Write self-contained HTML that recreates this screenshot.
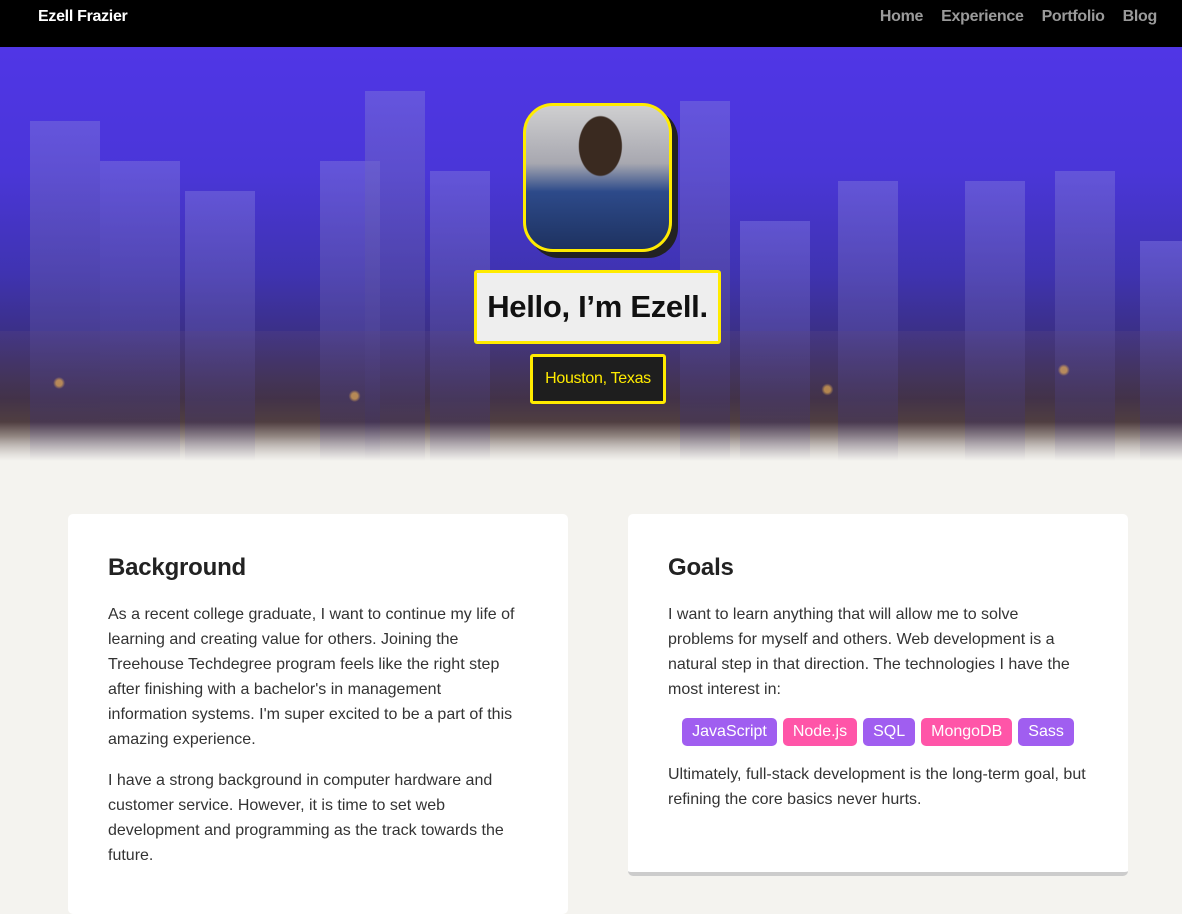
<!DOCTYPE html>
<html><head><meta charset="utf-8"><style>
*{margin:0;padding:0;box-sizing:border-box}
body{width:1182px;height:904px;overflow:hidden;background:#f4f3ef;font-family:"Liberation Sans",sans-serif;color:#333;position:relative}
nav{position:absolute;top:0;left:0;right:0;height:47px;background:#000;}
nav .brand{position:absolute;left:38px;top:8px;color:#fff;font-weight:bold;font-size:16px;letter-spacing:-0.3px}
nav .links{position:absolute;right:25px;top:8px;font-weight:bold;font-size:16px;color:#9a9a9a;letter-spacing:-0.3px}
nav .links span{margin-left:18px}
.hero{position:absolute;top:47px;left:0;width:1182px;height:414px;overflow:hidden;
background:linear-gradient(180deg,#5036e6 0%,#4a36d8 30%,#3f33b0 55%,#3a2f7e 72%,#3d3050 85%,#6a5a50 94%,#f4f3ef 100%)}
.b{position:absolute;bottom:0;background:linear-gradient(180deg,rgba(120,110,220,.55),rgba(60,50,120,.6))}
.lights{position:absolute;left:0;right:0;bottom:0;height:130px;background:
radial-gradient(circle at 5% 40%,rgba(255,190,80,.6) 0 3px,transparent 6px),
radial-gradient(circle at 30% 50%,rgba(255,190,80,.6) 0 3px,transparent 6px),
radial-gradient(circle at 50% 35%,rgba(255,190,80,.6) 0 3px,transparent 6px),
radial-gradient(circle at 70% 45%,rgba(255,190,80,.6) 0 3px,transparent 6px),
radial-gradient(circle at 90% 30%,rgba(255,190,80,.6) 0 3px,transparent 6px),
linear-gradient(180deg,rgba(90,70,130,.3),rgba(70,50,50,.5) 70%,rgba(244,243,239,1))}
.photo{position:absolute;left:523px;top:103px;width:149px;height:149px;border:3px solid #ffeb00;border-radius:30px;
background:radial-gradient(ellipse at 52% 28%,#3a2a20 0 20%,transparent 21%),linear-gradient(180deg,#cfcfd0 0%,#a8a8b0 40%,#2d4a8a 60%,#1e3260 100%);box-shadow:6px 6px 0 #222}
.hello{position:absolute;left:474px;top:270px;width:247px;height:74px;background:#eee;border:3px solid #ffeb00;border-radius:3px;
font-size:31px;font-weight:bold;color:#111;text-align:center;line-height:68px;letter-spacing:-0.3px}
.loc{position:absolute;left:530px;top:354px;width:136px;height:50px;background:#1e1e1e;border:3px solid #ffeb00;border-radius:3px;color:#ffeb00;font-size:16px;text-align:center;line-height:44px;letter-spacing:-0.3px}
.card{position:absolute;top:514px;width:500px;background:#fff;border-radius:5px;padding:40px}
.card h2{font-size:24px;font-weight:bold;color:#222;margin-top:0;line-height:28px;margin-bottom:20px;letter-spacing:-0.2px}
.card p{font-size:16px;line-height:25px;color:#333;margin-bottom:16px;white-space:nowrap}
.tags{text-align:center;margin:7px 0 16px}
.tags span{display:inline-block;color:#fff;padding:0 10px;height:28px;line-height:28px;border-radius:5px;margin:0 3px;font-size:16px}
.p{background:#a05ef0}.k{background:#ff55a8}
</style></head><body>
<nav><div class="brand">Ezell Frazier</div><div class="links"><span>Home</span><span>Experience</span><span>Portfolio</span><span>Blog</span></div></nav>
<div class="hero">
<div class="b" style="left:30px;width:70px;height:340px"></div>
<div class="b" style="left:100px;width:80px;height:300px"></div>
<div class="b" style="left:185px;width:70px;height:270px"></div>
<div class="b" style="left:320px;width:60px;height:300px"></div>
<div class="b" style="left:365px;width:60px;height:370px"></div>
<div class="b" style="left:430px;width:60px;height:290px"></div>
<div class="b" style="left:680px;width:50px;height:360px"></div>
<div class="b" style="left:740px;width:70px;height:240px"></div>
<div class="b" style="left:838px;width:60px;height:280px"></div>
<div class="b" style="left:965px;width:60px;height:280px"></div>
<div class="b" style="left:1055px;width:60px;height:290px"></div>
<div class="b" style="left:1140px;width:42px;height:220px"></div>
<div class="lights"></div>
</div>
<div class="photo"></div>
<div class="hello">Hello, I’m Ezell.</div>
<div class="loc">Houston, Texas</div>
<div class="card" style="left:68px;height:400px">
<h2>Background</h2>
<p>As a recent college graduate, I want to continue my life of<br>learning and creating value for others. Joining the<br>Treehouse Techdegree program feels like the right step<br>after finishing with a bachelor's in management<br>information systems. I'm super excited to be a part of this<br>amazing experience.</p>
<p>I have a strong background in computer hardware and<br>customer service. However, it is time to set web<br>development and programming as the track towards the<br>future.</p>
</div>
<div class="card" style="left:628px;height:362px;border-bottom:4px solid #ccc">
<h2>Goals</h2>
<p>I want to learn anything that will allow me to solve<br>problems for myself and others. Web development is a<br>natural step in that direction. The technologies I have the<br>most interest in:</p>
<div class="tags"><span class="p">JavaScript</span><span class="k">Node.js</span><span class="p">SQL</span><span class="k">MongoDB</span><span class="p">Sass</span></div>
<p>Ultimately, full-stack development is the long-term goal, but<br>refining the core basics never hurts.</p>
</div>
</body></html>
